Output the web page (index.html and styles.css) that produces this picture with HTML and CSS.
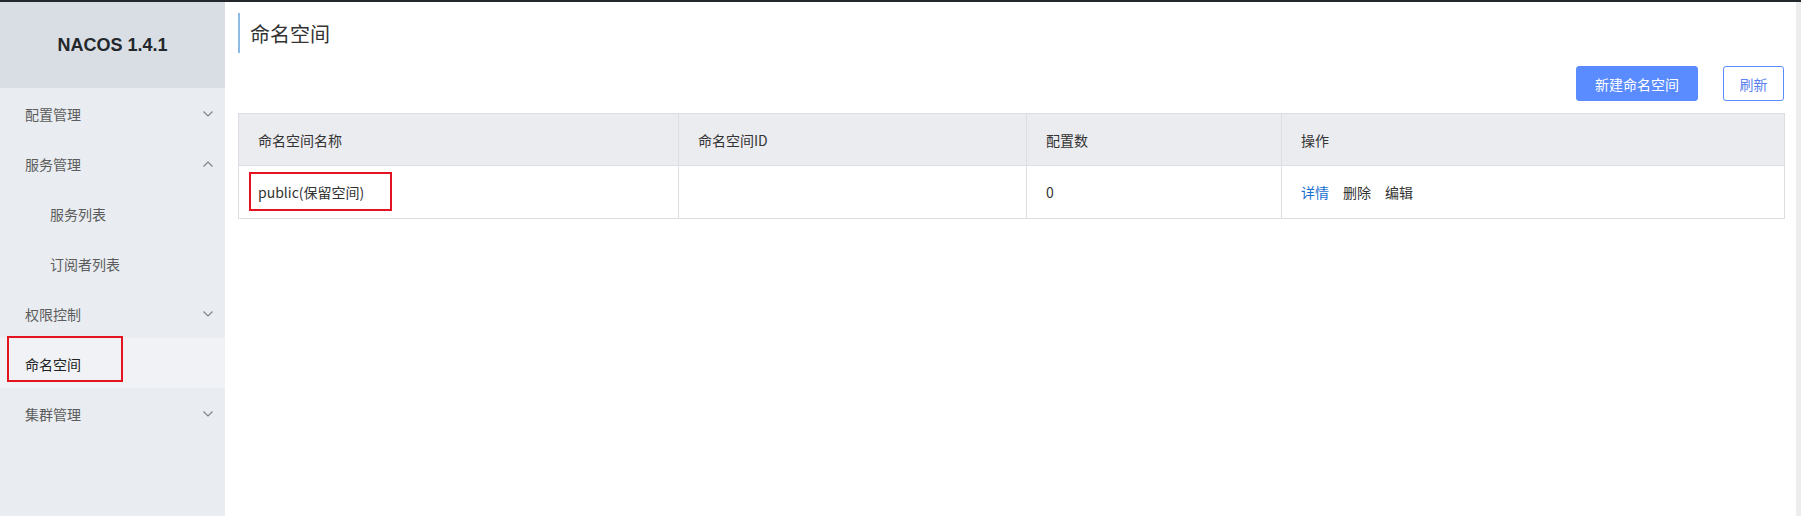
FILE: index.html
```html
<!DOCTYPE html>
<html lang="zh">
<head>
<meta charset="utf-8">
<title>命名空间</title>
<link rel="stylesheet" href="styles.css">
</head>
<body>
<div class="app">
  <aside class="sidebar">
    <div class="brand">NACOS 1.4.1</div>
    <nav class="menu">
      <div class="item"><span>配置管理</span><svg class="chev" width="10" height="6" viewBox="0 0 10 6"><polyline points="0.5,0.5 5,5 9.5,0.5"/></svg></div>
      <div class="item"><span>服务管理</span><svg class="chev" width="10" height="6" viewBox="0 0 10 6"><polyline points="0.5,5.5 5,1 9.5,5.5"/></svg></div>
      <div class="item sub"><span>服务列表</span></div>
      <div class="item sub"><span>订阅者列表</span></div>
      <div class="item"><span>权限控制</span><svg class="chev" width="10" height="6" viewBox="0 0 10 6"><polyline points="0.5,0.5 5,5 9.5,0.5"/></svg></div>
      <div class="item active"><span>命名空间</span><i class="mark mark-nav"></i></div>
      <div class="item"><span>集群管理</span><svg class="chev" width="10" height="6" viewBox="0 0 10 6"><polyline points="0.5,0.5 5,5 9.5,0.5"/></svg></div>
    </nav>
  </aside>
  <main class="main">
    <h1 class="title">命名空间</h1>
    <div class="toolbar">
      <button class="btn primary">新建命名空间</button>
      <button class="btn outline">刷新</button>
    </div>
    <table class="grid">
      <colgroup>
        <col class="c1"><col class="c2"><col class="c3"><col class="c4">
      </colgroup>
      <thead>
        <tr><th>命名空间名称</th><th>命名空间ID</th><th>配置数</th><th>操作</th></tr>
      </thead>
      <tbody>
        <tr>
          <td class="name-cell"><span class="name">public(保留空间)</span><i class="mark mark-cell"></i></td>
          <td></td>
          <td>0</td>
          <td class="ops"><a class="link">详情</a><a class="op">删除</a><a class="op">编辑</a></td>
        </tr>
      </tbody>
    </table>
  </main>
  <div class="scrolltrack"></div>
</div>
</body>
</html>
```
FILE: styles.css
```css
* { box-sizing: border-box; }
html, body { margin: 0; padding: 0; }
body {
  font-family: "Noto Sans CJK SC", "Liberation Sans", sans-serif;
  font-size: 14px;
  color: #333;
  background: #fff;
  border-top: 2px solid #24282c;
}
.app {
  display: flex;
  height: 514px;
}
.sidebar {
  width: 225px;
  flex: none;
  background: #e9ecf1;
  display: flex;
  flex-direction: column;
}
.brand {
  height: 86px;
  background: #d9dde4;
  display: flex;
  align-items: center;
  justify-content: center;
  font-family: "Liberation Sans", Arial, sans-serif;
  font-weight: bold;
  font-size: 18px;
  color: #23272b;
}
.menu { display: flex; flex-direction: column; }
.item {
  position: relative;
  height: 50px;
  display: flex;
  align-items: center;
  justify-content: space-between;
  padding: 2px 12px 0 25px;
  color: #5c5c5c;
  font-size: 14px;
}
.item.sub { padding-left: 50px; }
.item.active { background: #f1f2f6; color: #222; }
.chev { fill: none; stroke: #7c8088; stroke-width: 1.1; }
.mark {
  position: absolute;
  border: 2px solid #e3141f;
  pointer-events: none;
}
.mark-nav { left: 7px; top: -2px; width: 116px; height: 46px; }

.main {
  flex: 1;
  display: flex;
  flex-direction: column;
  padding: 11px 11px 0 13px;
}
.title {
  margin: 0;
  height: 40px;
  border-left: 2px solid #8dbbe5;
  padding-left: 10px;
  display: flex;
  align-items: center;
  font-size: 20px;
  font-weight: normal;
  color: #333;
}
.toolbar {
  display: flex;
  justify-content: flex-end;
  gap: 25px;
  margin-top: 13px;
  padding-right: 1px;
}
.btn {
  height: 35px;
  font-family: "Noto Sans CJK SC", sans-serif;
  font-size: 14px;
  border-radius: 3px;
  padding: 0;
  cursor: pointer;
}
.btn.primary {
  width: 122px;
  background: #5a8cff;
  border: 1px solid #5a8cff;
  color: #fff;
}
.btn.outline {
  width: 61px;
  background: #fff;
  border: 1px solid #5a8cff;
  color: #5a7ff0;
}
.grid {
  margin-top: 12px;
  width: 1546px;
  border-collapse: collapse;
  table-layout: fixed;
}
.c1 { width: 440px; }
.c2 { width: 348px; }
.c3 { width: 255px; }
.c4 { width: 503px; }
.grid th, .grid td {
  border: 1px solid #dcdee3;
  text-align: left;
  padding: 0 19px;
  font-size: 14px;
  font-weight: normal;
  color: #333;
}
.grid th { height: 52px; background: #ebecf0; }
.grid td { height: 53px; }
.name-cell { position: relative; }
.mark-cell { left: 10px; top: 6px; width: 143px; height: 39px; }
.ops a { margin-right: 14px; }
.link { color: #1a6fd0; }
.op { color: #333; }
.scrolltrack {
  width: 6px;
  flex: none;
  background: #ededed;
}
```
